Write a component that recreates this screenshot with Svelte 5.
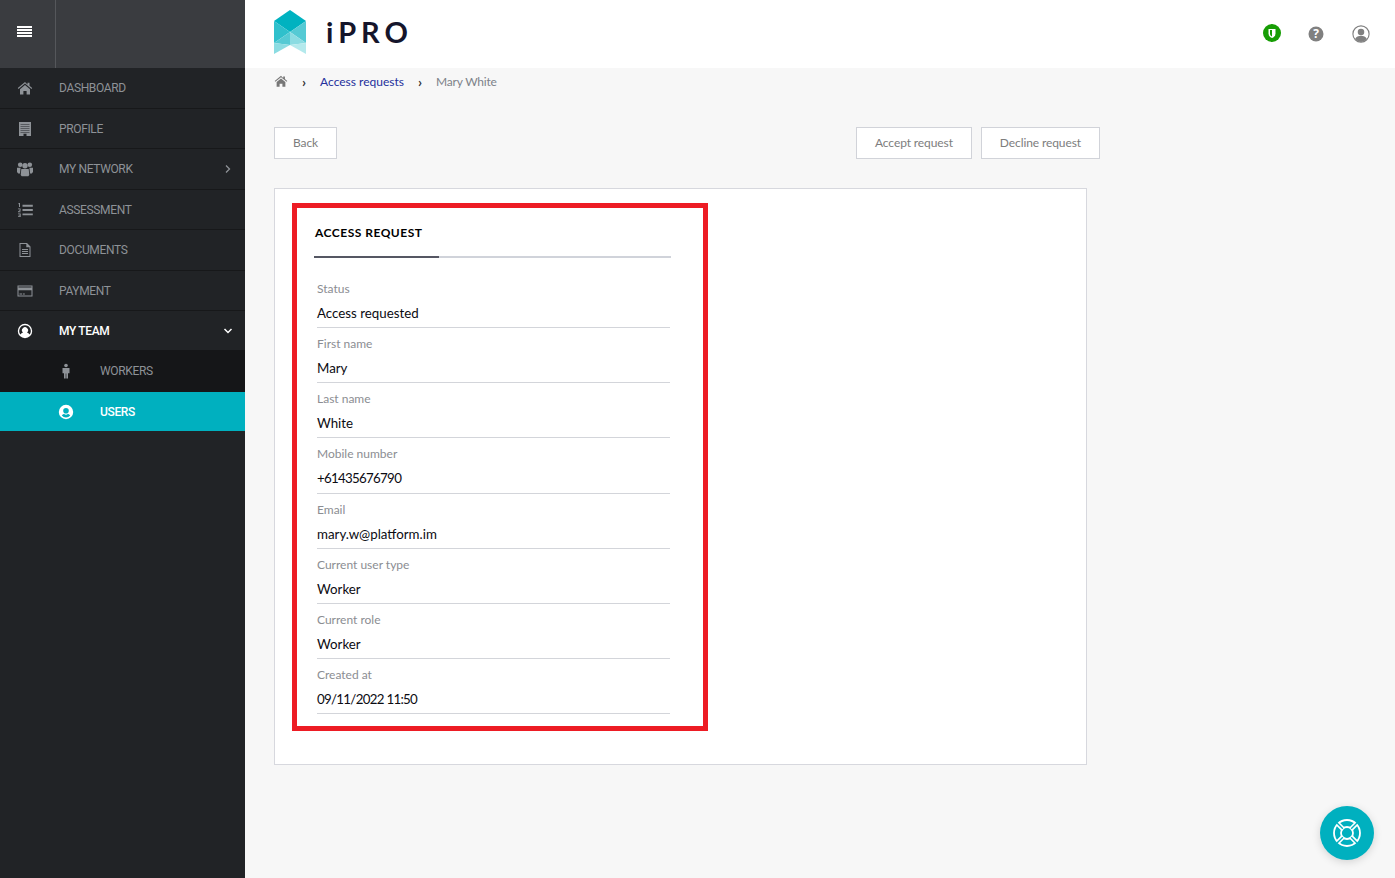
<script>
	const fields = [
		{ label: 'Status', value: 'Access requested' },
		{ label: 'First name', value: 'Mary' },
		{ label: 'Last name', value: 'White' },
		{ label: 'Mobile number', value: '+61435676790', digits: true },
		{ label: 'Email', value: 'mary.w@platform.im' },
		{ label: 'Current user type', value: 'Worker' },
		{ label: 'Current role', value: 'Worker' },
		{ label: 'Created at', value: '09/11/2022 11:50', digits: true }
	]

	const nav = [
		{ label: 'DASHBOARD', icon: 'home' },
		{ label: 'PROFILE', icon: 'building' },
		{ label: 'MY NETWORK', icon: 'users', arrow: 'right' },
		{ label: 'ASSESSMENT', icon: 'list' },
		{ label: 'DOCUMENTS', icon: 'doc' },
		{ label: 'PAYMENT', icon: 'card' },
		{ label: 'MY TEAM', icon: 'user', arrow: 'down', open: true }
	]
</script>

{#snippet icon(name)}
	<svg class="ico" viewBox="0 0 16 16" aria-hidden="true">
		{#if name === 'home'}
			<path d="M8 2 .8 8l.7.9L8 3.600l6.500 5.300.7-.9-2.700-2.200V2.800h-2v1.700zM3 9.200V14.500h3.400v-3.500h3.200v3.500H13V9.200L8 5.100z" />
		{:else if name === 'building'}
			<path fill-rule="evenodd" d="M2 1h12v14H2zM3.500 3v.6h9V3zm0 2v.6h9V5zm0 2v.6h9V7zm0 2v.6h9V9zm0 2v.6h9v-.6zm3 1.800V15h3v-2.200z" />
		{:else if name === 'users'}
			<circle cx="3.200" cy="3.800" r="2.300" /><circle cx="12.800" cy="3.800" r="2.300" /><circle cx="8" cy="4.800" r="2.700" />
			<path d="M0 6.800h3.600L3 12.500H1.200L0 11zM16 6.800h-3.600l.6 5.700h1.800L16 11zM4.300 8h7.400l.6 6-1 1.200H4.700L3.700 14z" />
		{:else if name === 'list'}
			<path d="M5.500 2.800h10.300v1.900H5.500zM5.500 7.100h10.300V9H5.500zM5.500 11.400h10.300v1.900H5.500zM1.500 1H3v4H2V2.200h-.5zM1 6.500h2.500l.2 2L2.200 9.600h1.500v.7H1V9.500l1.700-1.300v-1H1zM1 11.500h2.700V15H1v-.7h1.700v-.7H1.500V13h1.200v-.8H1z" />
		{:else if name === 'doc'}
			<path fill-rule="evenodd" d="M2.500 1H10l3.500 3.500V15h-11zM3.500 2v12h9V5.200H9.300V2zM5 7h6v1H5zm0 2h6v1H5zm0 2h6v1H5z" />
		{:else if name === 'card'}
			<path fill-rule="evenodd" d="M.5 2.500h15v11H.5zM1.500 3.500v1h13v-1zm0 3.800v5.200h13V7.300zm1 3.200h2.500v1H2.500zm3.300 0h2v1h-2z" />
		{:else if name === 'user'}
			<path fill-rule="evenodd" d="M8 .8a7.200 7.200 0 1 0 0 14.400A7.200 7.200 0 0 0 8 .8zm0 1.400a5.800 5.800 0 0 1 4.500 9.400C11.900 10.200 10.400 9.700 10 9.500a3 3 0 1 0-4 0c-.4.200-1.900.7-2.500 2.100A5.800 5.800 0 0 1 8 2.200z" />
		{:else if name === 'solid-user'}
			<path fill-rule="evenodd" d="M8 .8a7.200 7.200 0 1 0 0 14.400A7.200 7.200 0 0 0 8 .8zM8 4a2.800 2.800 0 1 1 0 5.600A2.800 2.800 0 0 1 8 4zm0 9.500a5.500 5.500 0 0 1-4.200-2c.8-1 2-1.400 2.400-1.400a3.400 3.400 0 0 0 3.600 0c.4 0 1.600.4 2.400 1.400a5.500 5.500 0 0 1-4.200 2z" />
		{:else if name === 'person'}
			<circle cx="8" cy="2.500" r="1.800" />
			<path d="M4.500 5h7v5.200H10V15.500H8.300v-5h-.6v5H6v-5.300H4.500z" />
		{/if}
	</svg>
{/snippet}

<div class="page">
	<aside class="sidebar">
		<div class="brand">
			<div class="burger"><span></span><span></span><span></span><span></span></div>
		</div>
		<nav>
			{#each nav as item}
				<div class="item" class:open={item.open}>
					<span class="slot">{@render icon(item.icon)}</span>
					<span class="name">{item.label}</span>
					{#if item.arrow}
						<svg class="arrow" class:down={item.arrow === 'down'} viewBox="0 0 10 10" aria-hidden="true">
							<path d="M3 1.500 6.500 5 3 8.500" />
						</svg>
					{/if}
				</div>
			{/each}
			<div class="sub">
				<div class="subitem">
					<span class="slot">{@render icon('person')}</span>
					<span class="name">WORKERS</span>
				</div>
				<div class="subitem active">
					<span class="slot">{@render icon('solid-user')}</span>
					<span class="name">USERS</span>
				</div>
			</div>
		</nav>
	</aside>

	<div class="main">
		<header>
			<div class="logo">
				<svg viewBox="0 0 32 44" width="32" height="44" aria-hidden="true">
					<polygon points="16,0 32,11 16,22 0,11" fill="#00b2c0" />
					<polygon points="0,11 16,22 0,33" fill="#2fc0cc" />
					<polygon points="32,11 16,22 32,33" fill="#55cad4" />
					<polygon points="16,22 0,33 16,35" fill="#55cad4" />
					<polygon points="16,22 32,33 16,35" fill="#8bdce2" />
					<polygon points="0,33 16,35 0,44" fill="#8bdce2" />
					<polygon points="32,33 16,35 32,44" fill="#b4e9ec" />
				</svg>
				<span class="wordmark">iPRO</span>
			</div>
			<div class="tools">
				<span class="shield">
					<svg viewBox="0 0 18 18" width="18" height="18" aria-hidden="true">
						<circle cx="9" cy="9" r="9" fill="#179d05" />
						<path d="M5.500 5h7v4.500C12.500 12 10.500 13.500 9 14c-1.500-.5-3.500-2-3.500-4.500z" fill="#fff" />
						<path d="M9 6v6.500C7.800 12 7 11 7 9.500V6z" fill="#179d05" />
					</svg>
				</span>
				<svg viewBox="0 0 16 16" width="16" height="16" aria-hidden="true">
					<circle cx="8" cy="8" r="7.500" fill="#808080" />
					<text x="8" y="12.300" text-anchor="middle" class="q">?</text>
				</svg>
				<svg viewBox="0 0 16 16" width="18" height="18" aria-hidden="true">
					<circle cx="8" cy="8" r="7.200" fill="#fff" stroke="#808080" />
					<circle cx="8" cy="6.200" r="2.900" fill="#808080" />
					<path d="M2.800 12.500c.8-2 3-2.900 5.200-2.900s4.400.9 5.200 2.900A7 7 0 0 1 8 15a7 7 0 0 1-5.200-2.500z" fill="#808080" />
				</svg>
			</div>
		</header>

		<div class="crumbs">
			<svg class="crumb-home" viewBox="0 0 16 16" aria-hidden="true">
				<path d="M8 2 .8 8l.7.9L8 3.600l6.500 5.300.7-.9-2.700-2.200V2.800h-2v1.700zM3 9.200V14.500h3.400v-3.500h3.200v3.500H13V9.200L8 5.100z" />
			</svg>
			<span class="sep">›</span>
			<a href="#requests">Access requests</a>
			<span class="sep">›</span>
			<span class="current">Mary White</span>
		</div>

		<div class="actions">
			<button>Back</button>
			<div class="right">
				<button>Accept request</button>
				<button>Decline request</button>
			</div>
		</div>

		<section class="card">
			<div class="marked">
				<h2>ACCESS REQUEST</h2>
				<div class="tabline"><span></span></div>
				<div class="fields">
					{#each fields as f}
						<div class="field">
							<label for={f.label}>{f.label}</label>
							<div class="value" class:digits={f.digits} id={f.label}>{f.value}</div>
						</div>
					{/each}
				</div>
			</div>
		</section>
	</div>

	<button class="help-fab" aria-label="Help">
		<svg viewBox="0 0 30 30" width="30" height="30" fill="none" stroke="#fff" stroke-width="1.800" aria-hidden="true">
			<circle cx="15" cy="15" r="13" />
			<circle cx="15" cy="15" r="6" />
			<path d="m5.800 5.800 5 5M24.200 5.800l-5 5M5.800 24.200l5-5M24.200 24.200l-5-5" stroke-width="4.600" />
			<path d="m5 5 5.800 5.800M25 5l-5.800 5.800M5 25l5.800-5.800M25 25l-5.800-5.800" stroke="#00b0bf" stroke-width="1.400" />
		</svg>
	</button>
</div>

<style>
	:global(body) {
		background: #f7f7f7;
		font-family: Lato, "Noto Sans", sans-serif;
	}

	.page {
		display: flex;
		min-height: 878px;
		position: relative;
		overflow: hidden;
	}

	.sidebar {
		width: 245px;
		flex: none;
		background: #212326;
		font-family: Roboto, sans-serif;
	}

	.brand {
		height: 68px;
		background: #3a3c40;
		display: flex;
	}

	.burger {
		width: 56px;
		border-right: 1px solid #55575b;
		display: flex;
		flex-direction: column;
		justify-content: center;
		align-items: center;
		gap: 1px;
		padding: 0 7px 5px 0;
		box-sizing: border-box;
	}

	.burger span {
		width: 15px;
		height: 2px;
		background: #fff;
	}

	.item, .subitem {
		display: flex;
		align-items: center;
		font-size: 12px;
		letter-spacing: -0.35px;
		color: #8e9297;
		box-sizing: border-box;
	}

	.item {
		height: 40.500px;
		border-bottom: 1px solid #17181a;
		padding-top: 1px;
	}

	.item.open {
		color: #fff;
		font-weight: 500;
		border-bottom: none;
		height: 39px;
	}

	.slot {
		width: 59px;
		flex: none;
		display: flex;
		justify-content: center;
		padding-right: 10px;
		box-sizing: border-box;
	}

	.ico {
		width: 16px;
		height: 16px;
		fill: currentColor;
	}

	.arrow {
		width: 10px;
		height: 10px;
		margin-left: auto;
		margin-right: 12px;
		fill: none;
		stroke: currentColor;
		stroke-width: 1.300;
	}

	.arrow.down {
		transform: rotate(90deg);
		stroke-width: 1.500;
	}

	.sub {
		background: #151618;
	}

	.subitem {
		height: 42px;
		padding-left: 41px;
	}

	.subitem .slot {
		width: 59px;
		padding-right: 25px;
		justify-content: flex-start;
		padding-left: 17px;
	}

	.subitem.active {
		background: #00b0bf;
		color: #fff;
		height: 39px;
		font-weight: 500;
	}

	.main {
		flex: 1;
		min-width: 0;
	}

	header {
		height: 68px;
		background: #fff;
		display: flex;
		align-items: center;
		justify-content: space-between;
		padding: 0 25.500px 4px 29px;
		box-sizing: border-box;
	}

	.logo {
		display: flex;
		align-items: center;
		gap: 20px;
	}

	.wordmark {
		font-family: Lato, sans-serif;
		font-weight: 700;
		font-size: 29px;
		letter-spacing: 5px;
		color: #15152b;
		margin-top: -2px;
	}

	.tools {
		display: flex;
		align-items: center;
		gap: 27.500px;
		margin-top: 4px;
	}

	.shield {
		display: flex;
		margin-top: -2px;
	}

	.q {
		font: 700 12px "Open Sans", sans-serif;
		fill: #fff;
	}

	.crumbs {
		display: flex;
		align-items: center;
		height: 26px;
		padding-left: 29px;
		font-size: 12px;
	}

	.crumb-home {
		width: 14px;
		height: 14px;
		fill: #777;
	}

	.sep {
		margin: 0 14px;
		color: #333;
		font-weight: 700;
		font-size: 14px;
	}

	.crumbs a {
		color: #24309c;
		text-decoration: none;
	}

	.current {
		color: #7d8289;
		letter-spacing: -0.2px;
	}

	.actions {
		width: 826px;
		margin: 33px 0 0 29px;
		display: flex;
		justify-content: space-between;
	}

	.right {
		display: flex;
		gap: 9px;
	}

	button {
		font: inherit;
	}

	.actions button {
		height: 32px;
		background: #fff;
		border: 1px solid #d1d3d9;
		color: #7d7d7d;
		font-size: 12px;
		letter-spacing: -0.1px;
		padding: 0 18px 2px;
	}

	.card {
		width: 813px;
		height: 577px;
		box-sizing: border-box;
		margin: 29px 0 0 29px;
		background: #fff;
		border: 1px solid #d7d8de;
		padding: 14px 17px;
	}

	.marked {
		width: 416px;
		height: 528px;
		box-sizing: border-box;
		border: 5px solid #ed1c24;
		padding: 15px 32px 0 17px;
	}

	h2 {
		margin: 0 0 0 1px;
		font-size: 12px;
		font-weight: 700;
		letter-spacing: 0.500px;
		color: #000;
		line-height: 20px;
	}

	.tabline {
		height: 2px;
		margin-top: 13px;
		background: #d0d3da;
	}

	.tabline span {
		display: block;
		width: 125px;
		height: 2px;
		background: #555763;
	}

	.fields {
		margin: 15px 0 0 3px;
		width: 353px;
	}

	.field {
		height: 55.140px;
		box-sizing: border-box;
		border-bottom: 1px solid #d3d5da;
	}

	label {
		display: block;
		font-size: 12px;
		line-height: 20px;
		color: #8b8d92;
		padding-top: 6px;
	}

	.value {
		font-size: 13.300px;
		line-height: 20px;
		margin-top: 4px;
		color: #0b0b12;
	}

	.value.digits {
		letter-spacing: -0.700px;
	}

	.help-fab {
		position: absolute;
		left: 1320px;
		top: 806px;
		width: 54px;
		height: 54px;
		border-radius: 50%;
		border: none;
		background: #00b0bf;
		box-shadow: 0 2px 8px rgba(0, 0, 0, 0.15);
		display: flex;
		align-items: center;
		justify-content: center;
		padding: 0;
	}
</style>
